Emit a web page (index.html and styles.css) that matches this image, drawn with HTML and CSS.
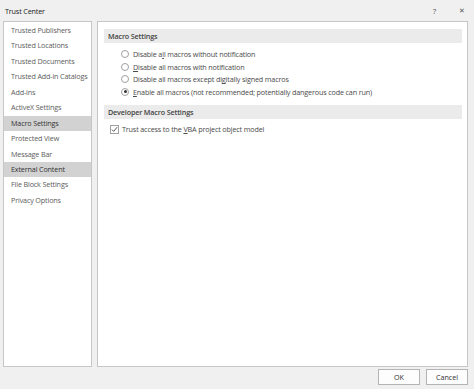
FILE: index.html
```html
<!DOCTYPE html>
<html lang="en">
<head>
    <meta charset="UTF-8">
    <meta name="viewport" content="width=device-width, initial-scale=1.0">
    <title>Trust Center</title>
    <link rel="stylesheet" href="styles.css">
</head>
<body>
    <header class="titlebar">
        <span class="title">Trust Center</span>
        <span class="title-btn help">?</span>
        <span class="title-btn close">&#x2715;</span>
    </header>

    <div class="panes">
        <ul class="nav">
            <li>Trusted Publishers</li>
            <li>Trusted Locations</li>
            <li>Trusted Documents</li>
            <li>Trusted Add-in Catalogs</li>
            <li>Add-ins</li>
            <li>ActiveX Settings</li>
            <li class="selected">Macro Settings</li>
            <li>Protected View</li>
            <li>Message Bar</li>
            <li class="selected">External Content</li>
            <li>File Block Settings</li>
            <li>Privacy Options</li>
        </ul>

        <main class="settings">
            <div class="section-head">Macro Settings</div>
            <div class="options">
                <label class="option"><span class="radio"></span><span>Disable a<u>l</u>l macros without notification</span></label>
                <label class="option"><span class="radio"></span><span><u>D</u>isable all macros with notification</span></label>
                <label class="option"><span class="radio"></span><span>Disable all macros except di<u>g</u>itally signed macros</span></label>
                <label class="option"><span class="radio checked"></span><span><u>E</u>nable all macros (not recommended; potentially dangerous code can run)</span></label>
            </div>

            <div class="section-head dev">Developer Macro Settings</div>
            <div class="checks">
                <label class="option">
                    <span class="checkbox">
                        <svg width="7" height="7" viewBox="0 0 7 7"><path d="M0.9 3.6 L2.7 5.4 L6.1 1.2" fill="none" stroke="#444" stroke-width="0.9"/></svg>
                    </span>
                    <span>Trust access to the <u>V</u>BA project object model</span>
                </label>
            </div>
        </main>
    </div>

    <footer class="footer">
        <button class="btn">OK</button>
        <button class="btn">Cancel</button>
    </footer>
</body>
</html>
```

FILE: styles.css
```css
body {
    margin: 0;
    background: #f0f0f0;
    font-family: "Segoe UI", "Open Sans", sans-serif;
    font-size: 7.2px;
    letter-spacing: -0.15px;
    color: #444;
    width: 474px;
    height: 389px;
    overflow: hidden;
}

.titlebar {
    display: flex;
    align-items: center;
    height: 21px;
    padding: 0 5px;
    box-sizing: border-box;
}

.title {
    flex: 1;
    color: #222;
}

.title-btn {
    color: #555;
    font-size: 8px;
}

.help {
    margin-right: 23px;
}

.close {
    margin-right: 4px;
    font-size: 7px;
}

.panes {
    display: flex;
    gap: 5px;
    height: 346px;
    margin: 0 6px 0 3px;
}

.nav {
    list-style: none;
    margin: 0;
    padding: 1px 0 0;
    width: 89px;
    box-sizing: border-box;
    background: #fff;
    border: 1px solid #c6c6c6;
}

.nav li {
    height: 15.45px;
    line-height: 15.45px;
    padding-left: 7px;
    color: #5c5c5c;
    white-space: nowrap;
}

.nav li.selected {
    background: #d2d2d2;
    color: #333;
}

.settings {
    flex: 1;
    background: #fff;
    border: 1px solid #c6c6c6;
    padding: 7px 5px 0 6px;
}

.section-head {
    height: 14px;
    line-height: 14px;
    padding-left: 4px;
    background: #ebebeb;
    font-weight: 600;
    color: #444;
}

.section-head.dev {
    margin-top: 7px;
}

.options {
    margin-top: 5px;
    padding-left: 17px;
}

.checks {
    margin-top: 4px;
    padding-left: 6px;
}

.option {
    display: flex;
    align-items: center;
    height: 12.5px;
    color: #4a4a4a;
    white-space: nowrap;
}

.radio {
    width: 6px;
    height: 6px;
    border: 1px solid #a0a0a0;
    border-radius: 50%;
    margin-right: 4px;
    position: relative;
    flex: none;
}

.radio.checked::after {
    content: "";
    position: absolute;
    left: 1.5px;
    top: 1.5px;
    width: 3px;
    height: 3px;
    border-radius: 50%;
    background: #333;
}

.checkbox {
    display: flex;
    width: 7px;
    height: 7px;
    border: 1px solid #a0a0a0;
    margin-right: 3px;
    flex: none;
}

.footer {
    display: flex;
    justify-content: flex-end;
    gap: 6px;
    padding: 2px 6px 0 0;
}

.btn {
    width: 42px;
    height: 16px;
    padding: 0;
    background: #fdfdfd;
    border: 1px solid #b4b4b4;
    font-family: "Segoe UI", "Open Sans", sans-serif;
    font-size: 7.2px;
    color: #333;
}
```
